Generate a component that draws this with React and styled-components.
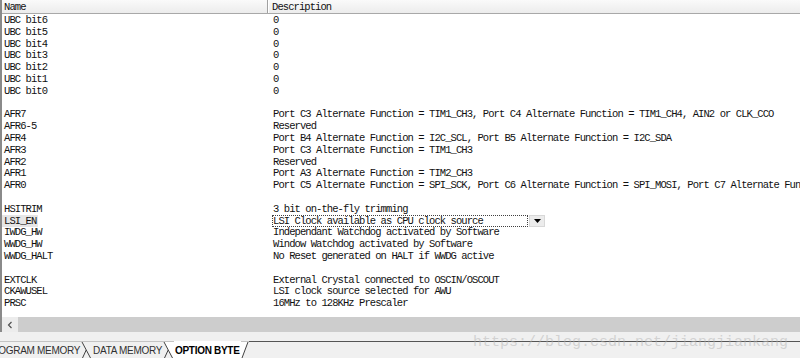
import styled, { createGlobalStyle } from 'styled-components';

const GlobalStyle = createGlobalStyle`
  html, body {
    margin: 0;
    padding: 0;
    background: #ffffff;
  }
`;

const rows = [
  ['UBC bit6', '0'],
  ['UBC bit5', '0'],
  ['UBC bit4', '0'],
  ['UBC bit3', '0'],
  ['UBC bit2', '0'],
  ['UBC bit1', '0'],
  ['UBC bit0', '0'],
  null,
  ['AFR7', 'Port C3 Alternate Function = TIM1_CH3, Port C4 Alternate Function = TIM1_CH4, AIN2 or CLK_CCO'],
  ['AFR6-5', 'Reserved'],
  ['AFR4', 'Port B4 Alternate Function = I2C_SCL, Port B5 Alternate Function = I2C_SDA'],
  ['AFR3', 'Port C3 Alternate Function = TIM1_CH3'],
  ['AFR2', 'Reserved'],
  ['AFR1', 'Port A3 Alternate Function = TIM2_CH3'],
  ['AFR0', 'Port C5 Alternate Function = SPI_SCK, Port C6 Alternate Function = SPI_MOSI, Port C7 Alternate Function = SPI_MISO'],
  null,
  ['HSITRIM', '3 bit on-the-fly trimming'],
  ['LSI_EN', 'LSI Clock available as CPU clock source', true],
  ['IWDG_HW', 'Independant Watchdog activated by Software'],
  ['WWDG_HW', 'Window Watchdog activated by Software'],
  ['WWDG_HALT', 'No Reset generated on HALT if WWDG active'],
  null,
  ['EXTCLK', 'External Crystal connected to OSCIN/OSCOUT'],
  ['CKAWUSEL', 'LSI clock source selected for AWU'],
  ['PRSC', '16MHz to 128KHz Prescaler'],
];

export default function App() {
  return (
    <>
      <GlobalStyle />
      <Frame>
        <ListArea>
          <Header>
            <HeaderCell>Name</HeaderCell>
            <HeaderCell $last>Description</HeaderCell>
          </Header>
          <Body>
            {rows.map((r, i) =>
              r ? (
                <Row key={i}>
                  <NameCell>
                    <NameText $selected={r[2]}>{r[0]}</NameText>
                  </NameCell>
                  <DescCell $editing={r[2]}>
                    {r[2] ? (
                      <Combo>
                        <ComboText>{r[1]}</ComboText>
                        <ComboButton>
                          <svg width="7" height="4" viewBox="0 0 7 4">
                            <path d="M0 0 H7 L3.5 4 Z" fill="#000" />
                          </svg>
                        </ComboButton>
                      </Combo>
                    ) : (
                      r[1]
                    )}
                  </DescCell>
                </Row>
              ) : (
                <Row key={i} />
              )
            )}
          </Body>
          <HScroll>
            <ScrollArrow>
              <svg width="6" height="8" viewBox="0 0 6 8">
                <path d="M4.5 1 L1.5 4 L4.5 7" fill="none" stroke="#505050" strokeWidth="1.2" />
              </svg>
            </ScrollArrow>
            <ScrollThumb />
          </HScroll>
        </ListArea>
        <Spacer />
        <TabStrip>
          <Tab $first>PROGRAM MEMORY</Tab>
          <TabJoint />
          <Tab>DATA MEMORY</Tab>
          <TabJoint $active />
          <Tab $active>OPTION BYTE</Tab>
          <TabEnd />
          <TabFiller />
          <Watermark>https://blog.csdn.net/jiangjiankang</Watermark>
        </TabStrip>
      </Frame>
    </>
  );
}

function TabJoint({ $active }) {
  return (
    <JointWrap>
      <svg width="11" height="16" viewBox="0 0 11 16">
        {$active && <polygon points="1,0 11,0 11,16 9.5,16" fill="#ffffff" />}
        <line x1="1" y1="0" x2="9.5" y2="16" stroke="#404040" strokeWidth="1" />
        <line x1="5.2" y1="8" x2="1.5" y2="16" stroke="#404040" strokeWidth="1" />
      </svg>
    </JointWrap>
  );
}

function TabEnd() {
  return (
    <JointWrap>
      <svg width="8" height="16" viewBox="0 0 8 16">
        <polygon points="0,0 7,0 1,16 0,16" fill="#ffffff" />
        <line x1="7" y1="0" x2="1" y2="16" stroke="#404040" strokeWidth="1" />
      </svg>
    </JointWrap>
  );
}

const Frame = styled.div`
  position: relative;
  width: 800px;
  height: 359px;
  display: flex;
  flex-direction: column;
  overflow: hidden;
  background: #ffffff;
  font-family: 'Liberation Mono', 'DejaVu Sans Mono', monospace;
  font-size: 10.5px;
  letter-spacing: -0.92px;
  color: #111111;
`;

const ListArea = styled.div`
  height: 333px;
  display: flex;
  flex-direction: column;
  border-left: 2px solid #8a8a8a;
  box-sizing: border-box;
`;

const Header = styled.div`
  height: 13px;
  display: grid;
  grid-template-columns: 266px 1fr;
  background: linear-gradient(#fafafa, #ececec);
  border-bottom: 1px solid #a8a8a8;
`;

const HeaderCell = styled.div`
  display: flex;
  align-items: center;
  padding-left: ${(p) => (p.$last ? '4px' : '2px')};
  border-right: ${(p) => (p.$last ? 'none' : '1px solid #a0a0a0')};
  box-shadow: ${(p) => (p.$last ? 'inset 1px 0 0 #ffffff' : 'none')};
  white-space: nowrap;
`;

const Body = styled.div`
  flex: 1;
  overflow: hidden;
`;

const Row = styled.div`
  height: 11.8px;
  display: grid;
  grid-template-columns: 266px 1fr;
  align-items: center;
`;

const NameCell = styled.div`
  height: 100%;
  display: flex;
  align-items: center;
  white-space: nowrap;
`;

const NameText = styled.span`
  height: 100%;
  display: flex;
  align-items: center;
  padding: 0 2px;
  background: ${(p) => (p.$selected ? '#e6e6e6' : 'transparent')};
`;

const DescCell = styled.div`
  padding-left: ${(p) => (p.$editing ? '4px' : '5px')};
  white-space: nowrap;
  overflow: ${(p) => (p.$editing ? 'visible' : 'hidden')};
  height: 100%;
  display: flex;
  align-items: center;
`;

const Combo = styled.div`
  width: 273px;
  height: 12px;
  display: flex;
  align-items: stretch;
`;

const ComboText = styled.div`
  flex: 1;
  display: flex;
  align-items: center;
  border: 1px dotted #404040;
  padding-left: 0;
`;

const ComboButton = styled.div`
  width: 14px;
  display: flex;
  align-items: center;
  justify-content: center;
  background: #ececec;
  border: 1px solid #d8d8d8;
  margin-left: 1px;
`;

const HScroll = styled.div`
  height: 15px;
  display: flex;
`;

const ScrollArrow = styled.div`
  width: 16px;
  display: flex;
  align-items: center;
  justify-content: center;
  background: #ececec;
`;

const ScrollThumb = styled.div`
  flex: 1;
  background: #cdcdcd;
`;

const Spacer = styled.div`
  height: 9px;
  background: #f0f0f0;
`;

const TabStrip = styled.div`
  position: relative;
  flex: 1;
  display: flex;
  align-items: stretch;
  background: #f0f0f0;
  border-bottom: 1px solid #ffffff;
`;

const Tab = styled.div`
  display: flex;
  align-items: center;
  padding: 0 1px;
  margin-left: ${(p) => (p.$first ? '-16px' : '0')};
  font-family: 'Liberation Sans', Arial, sans-serif;
  font-size: 10px;
  letter-spacing: -0.3px;
  font-weight: ${(p) => (p.$active ? 700 : 400)};
  color: ${(p) => (p.$active ? '#000000' : '#303030')};
  background: ${(p) => (p.$active ? '#ffffff' : 'transparent')};
  border-top: 1px solid ${(p) => (p.$active ? '#ffffff' : '#c4c4c4')};
  white-space: nowrap;
`;

const JointWrap = styled.div`
  display: flex;
  align-items: flex-start;
  border-top: 1px solid #c4c4c4;
`;

const TabFiller = styled.div`
  flex: 1;
  border-top: 1px solid #555555;
`;

const Watermark = styled.div`
  position: absolute;
  left: 473px;
  top: -7px;
  font-family: 'Liberation Mono', 'DejaVu Sans Mono', monospace;
  font-size: 15px;
  letter-spacing: 0;
  color: rgba(180, 180, 180, 0.5);
  white-space: nowrap;
  pointer-events: none;
`;
